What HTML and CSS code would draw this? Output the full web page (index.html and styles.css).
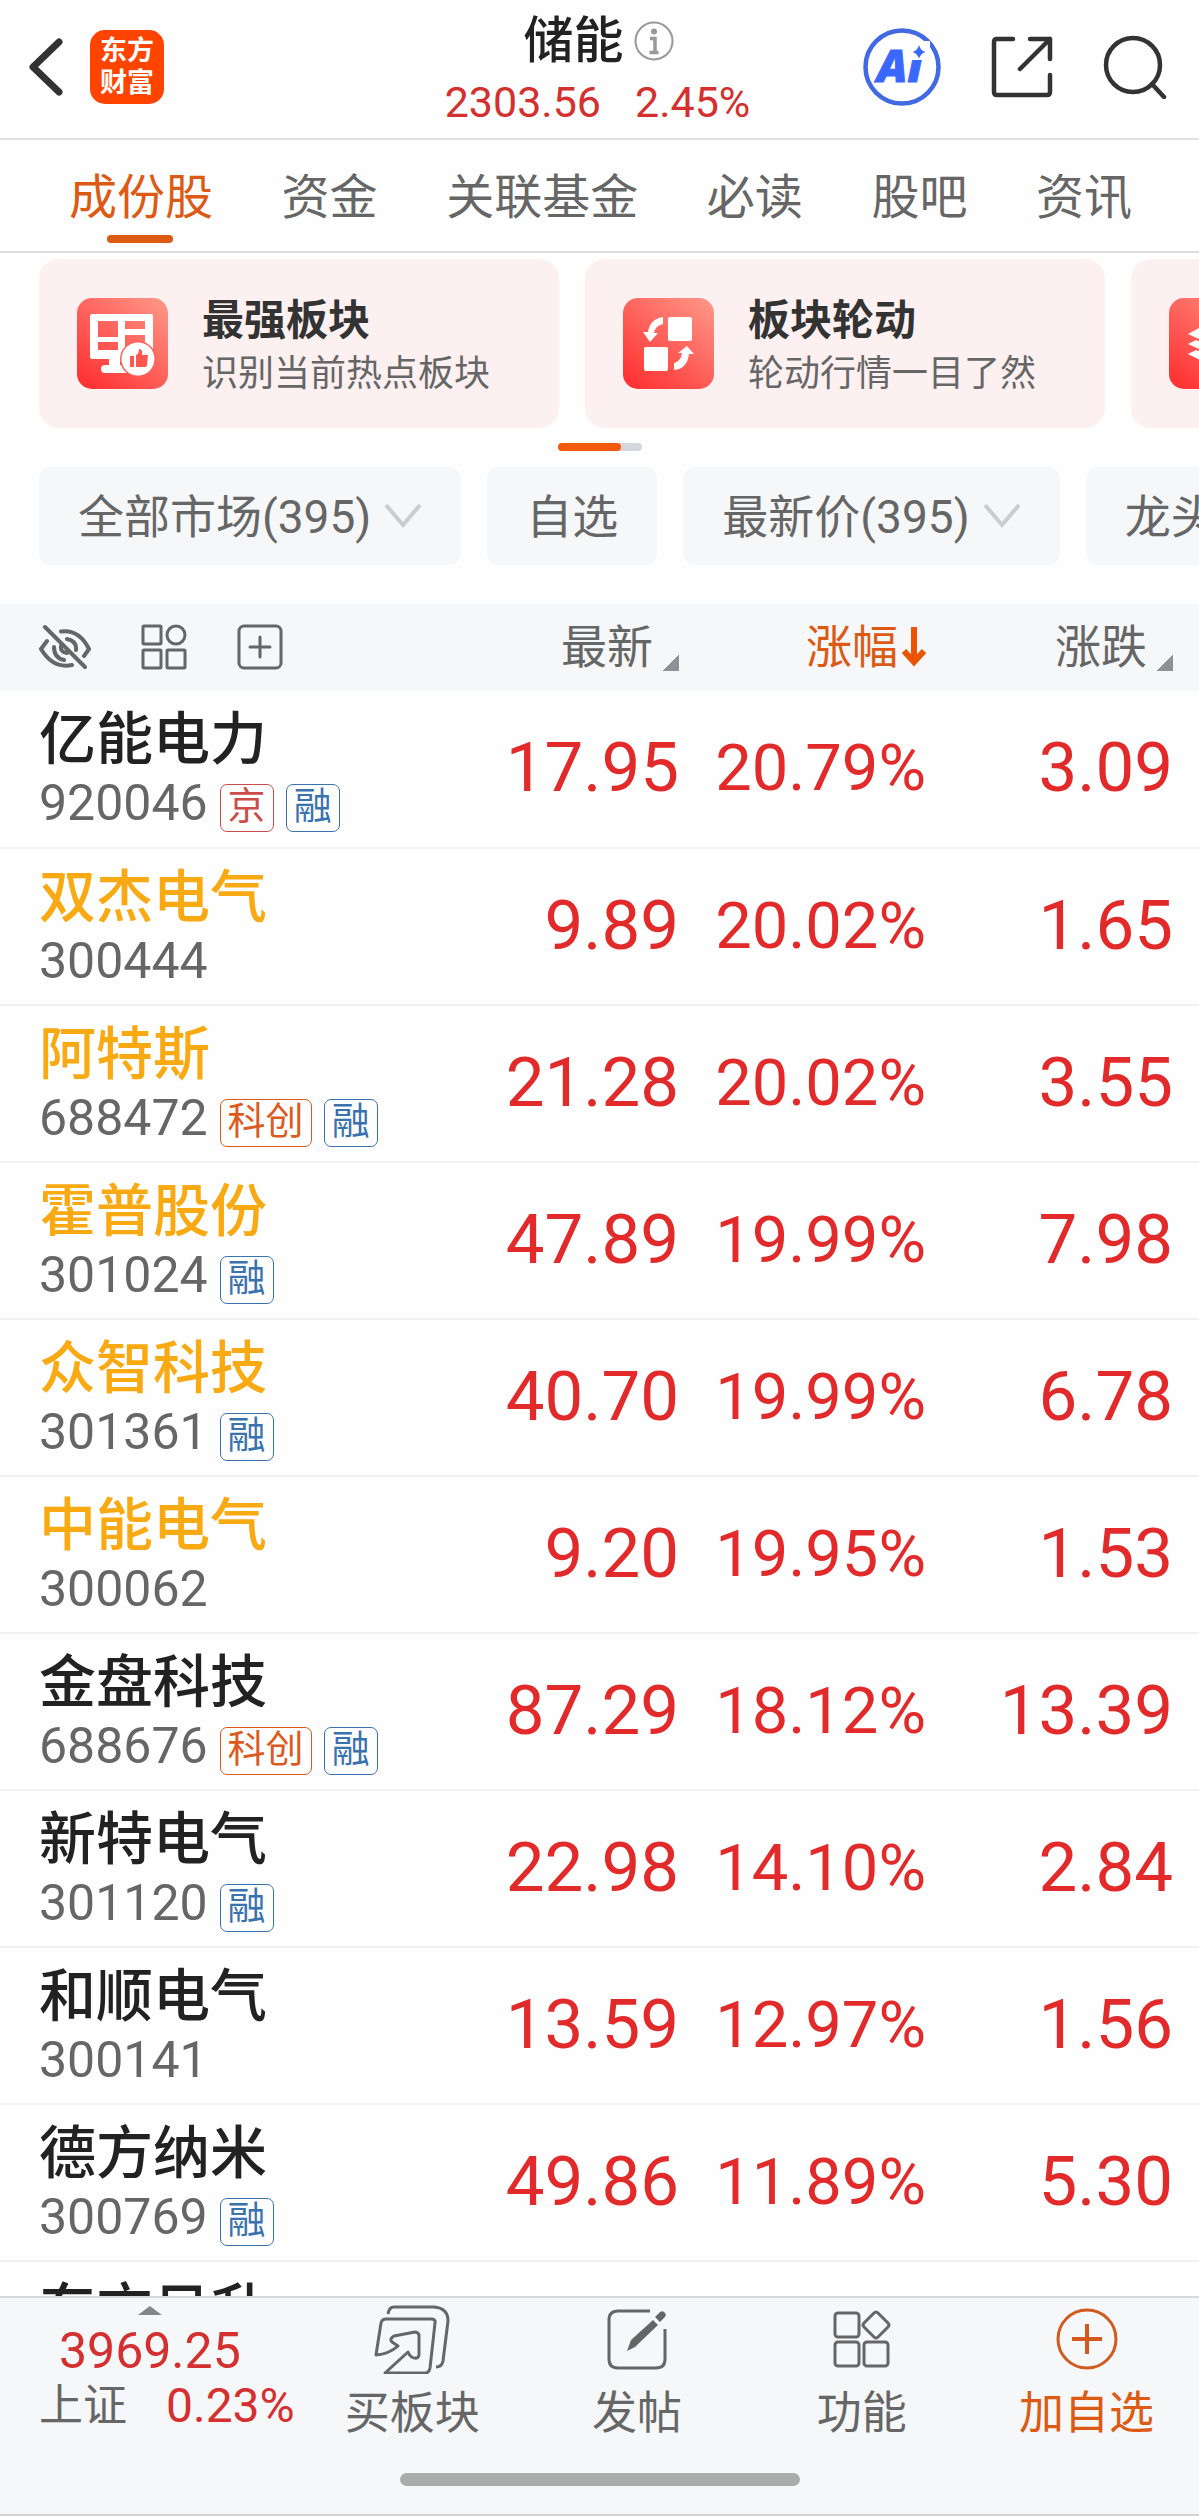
FILE: index.html
```html
<!DOCTYPE html>
<html lang="zh-CN">
<head>
<meta charset="utf-8">
<meta name="viewport" content="width=device-width">
<title>储能</title>
<link rel="stylesheet" href="styles.css">
</head>
<body>
<div class="app">
  <header class="topbar">
    <div class="topbar-left">
      <button class="icon-btn" type="button" aria-label="返回">
        <svg width="36" height="60" viewBox="0 0 36 60" fill="none" stroke="#333" stroke-width="7" stroke-linecap="round" stroke-linejoin="round"><path d="M31 5 5 30 31 55"/></svg>
      </button>
      <a class="logo" href="#"><span>东方</span><span>财富</span></a>
    </div>
    <div class="topbar-title">
      <h1>储能
        <svg width="40" height="40" viewBox="0 0 40 40" fill="none" stroke="#999" stroke-width="2"><circle cx="20" cy="20" r="18.500"/><circle cx="20" cy="10.500" r="3" fill="#999" stroke="none"/><path d="M16 17.500h5V31M15.500 31.500h9" stroke-width="3.500"/></svg>
      </h1>
      <p class="quote"><span>2303.56</span><span>2.45%</span></p>
    </div>
    <div class="topbar-right">
      <button class="icon-btn" type="button" aria-label="AI">
        <svg width="78" height="78" viewBox="0 0 78 78"><circle cx="39" cy="39" r="36.500" fill="#fff" stroke="#4169e1" stroke-width="4.500"/><text class="ai-text" x="14" y="54">Ai</text><path d="M47 13h20v19H47z" fill="#fff"/><path d="M56 17q1.500 5.500 6.500 7-5 1.500-6.500 7-1.500-5.500-6.500-7 5-1.500 6.500-7z" fill="#3a68ff"/></svg>
      </button>
      <button class="icon-btn" type="button" aria-label="分享">
        <svg width="62" height="62" viewBox="0 0 62 62" fill="none" stroke="#333" stroke-width="4.500" stroke-linecap="round" stroke-linejoin="round"><path d="M22 3H6Q3 3 3 6V56Q3 59 6 59H56Q59 59 59 56V39M39 3H59V23M59 3 29 33"/></svg>
      </button>
      <button class="icon-btn" type="button" aria-label="搜索">
        <svg width="64" height="64" viewBox="0 0 64 64" fill="none" stroke="#333" stroke-width="4.500" stroke-linecap="round"><circle cx="30" cy="30" r="27"/><path d="M49 49 61 62"/></svg>
      </button>
    </div>
  </header>

  <nav class="tabs">
    <a class="active" href="#">成份股</a>
    <a href="#">资金</a>
    <a href="#">关联基金</a>
    <a href="#">必读</a>
    <a href="#">股吧</a>
    <a href="#">资讯</a>
  </nav>

  <section class="cards">
    <a class="card" href="#">
      <svg class="card-icon" viewBox="0 0 91 91"><defs><linearGradient id="red" x1="0.100" y1="0.900" x2="0.850" y2="0"><stop offset="0" stop-color="#ff3535"/><stop offset="1" stop-color="#ff9284"/></linearGradient></defs><rect width="91" height="91" rx="15" fill="url(#red)"/><path fill="#fff" fill-rule="evenodd" d="M15 16h59q2 0 2 2v43q0 2-2 2H43v4h8v8H28q-4 0-4-4t4-4h4v-6H15q-2 0-2-2V18q0-2 2-2zM21 23v16h20V23zM48 23v8h20v-8zM48 37v13h20V37zM21 44v8h20v-8z"/><circle cx="61" cy="61" r="18" fill="#ff5f59"/><circle cx="61" cy="61" r="16.500" fill="#fff"/><path fill="#ff5750" d="M53 58h4v11h-4zM59 57q3-1 3-6 4 0 3 6h6l-1 10q0 2-3 2h-8z"/></svg>
      <span class="card-text"><strong>最强板块</strong><span>识别当前热点板块</span></span>
    </a>
    <a class="card" href="#">
      <svg class="card-icon" viewBox="0 0 91 91"><rect width="91" height="91" rx="15" fill="url(#red)"/><g fill="#fff"><rect x="45" y="19" width="24" height="24" rx="2"/><rect x="21" y="49" width="24" height="24" rx="2"/><path d="M20 34h5q2-13 15-15v7q-8 2-9 9h4l-8 9zM71 56h-5q-2 15-15 16v-7q7-2 8-10h-4l9-7z"/></g></svg>
      <span class="card-text"><strong>板块轮动</strong><span>轮动行情一目了然</span></span>
    </a>
    <a class="card" href="#" aria-label="更多">
      <svg class="card-icon" viewBox="0 0 91 91"><rect width="91" height="91" rx="15" fill="url(#red)"/><path fill="#fff" d="M19 36 45 22 71 36 45 48zM19 46l8-4 18 8 18-8 8 4-26 12zM19 56l8-4 18 8 18-8 8 4-26 13z"/></svg>
    </a>
  </section>
  <div class="pager"><span></span></div>

  <div class="chips">
    <button type="button"><span>全部市场(395)</span><svg width="38" height="26" viewBox="0 0 38 26" fill="none" stroke="#ccc" stroke-width="4"><path d="M2 2 19 22 36 2"/></svg></button>
    <button type="button"><span>自选</span></button>
    <button type="button"><span>最新价(395)</span><svg width="38" height="26" viewBox="0 0 38 26" fill="none" stroke="#ccc" stroke-width="4"><path d="M2 2 19 22 36 2"/></svg></button>
    <button type="button"><span>龙头</span></button>
  </div>

  <main class="list">
    <table>
      <colgroup><col><col class="col-price"><col class="col-rate"><col class="col-change"></colgroup>
      <thead>
        <tr>
          <th>
            <div class="tools">
              <button class="icon-btn" type="button" aria-label="隐藏"><svg width="52" height="46" viewBox="0 0 52 46" fill="none" stroke="#666" stroke-width="4" stroke-linecap="round"><path d="M6 3 46 43M22 7.500Q40 5 50 25L45 32M8 17 2 25Q14 45 33 41M15 23Q15 34 25 36M28 15Q38 17 37 26M22 22Q21 28 28 29"/></svg></button>
              <button class="icon-btn" type="button" aria-label="布局"><svg width="46" height="46" viewBox="0 0 46 46" fill="none" stroke="#666" stroke-width="3"><rect x="2" y="2" width="18" height="18" rx="1"/><circle cx="35" cy="11" r="9"/><rect x="2" y="26" width="18" height="18" rx="1"/><rect x="26" y="26" width="18" height="18" rx="1"/></svg></button>
              <button class="icon-btn" type="button" aria-label="添加"><svg width="46" height="46" viewBox="0 0 46 46" fill="none" stroke="#666" stroke-width="3" stroke-linecap="round"><rect x="2" y="2" width="42" height="42" rx="5"/><path d="M13 23H33M23 13V33"/></svg></button>
            </div>
          </th>
          <th><button class="sort" type="button">最新<i class="corner"></i></button></th>
          <th><button class="sort sorted" type="button">涨幅<svg width="24" height="40" viewBox="0 0 24 40" fill="none" stroke="#ea5404" stroke-width="6"><path d="M12 0V35M2 24 12 35 22 24"/></svg></button></th>
          <th><button class="sort" type="button">涨跌<i class="corner"></i></button></th>
        </tr>
      </thead>
      <tbody>
        <tr><td><div class="name">亿能电力</div><div class="meta">920046<span class="tag tag-jing">京</span><span class="tag">融</span></div></td><td>17.95</td><td>20.79%</td><td>3.09</td></tr>
        <tr><td><div class="name held">双杰电气</div><div class="meta">300444</div></td><td>9.89</td><td>20.02%</td><td>1.65</td></tr>
        <tr><td><div class="name held">阿特斯</div><div class="meta">688472<span class="tag tag-star">科创</span><span class="tag">融</span></div></td><td>21.28</td><td>20.02%</td><td>3.55</td></tr>
        <tr><td><div class="name held">霍普股份</div><div class="meta">301024<span class="tag">融</span></div></td><td>47.89</td><td>19.99%</td><td>7.98</td></tr>
        <tr><td><div class="name held">众智科技</div><div class="meta">301361<span class="tag">融</span></div></td><td>40.70</td><td>19.99%</td><td>6.78</td></tr>
        <tr><td><div class="name held">中能电气</div><div class="meta">300062</div></td><td>9.20</td><td>19.95%</td><td>1.53</td></tr>
        <tr><td><div class="name">金盘科技</div><div class="meta">688676<span class="tag tag-star">科创</span><span class="tag">融</span></div></td><td>87.29</td><td>18.12%</td><td>13.39</td></tr>
        <tr><td><div class="name">新特电气</div><div class="meta">301120<span class="tag">融</span></div></td><td>22.98</td><td>14.10%</td><td>2.84</td></tr>
        <tr><td><div class="name">和顺电气</div><div class="meta">300141</div></td><td>13.59</td><td>12.97%</td><td>1.56</td></tr>
        <tr><td><div class="name">德方纳米</div><div class="meta">300769<span class="tag">融</span></div></td><td>49.86</td><td>11.89%</td><td>5.30</td></tr>
        <tr><td><div class="name">东方日升</div><div class="meta"></div></td><td></td><td></td><td></td></tr>
      </tbody>
    </table>
  </main>

  <footer class="dock">
    <div class="dock-row">
      <a class="index" href="#">
        <i class="caret"></i>
        <span class="index-value">3969.25</span>
        <span class="index-line"><span>上证</span><span class="index-rate">0.23%</span></span>
      </a>
      <button class="action" type="button">
        <svg width="76" height="70" viewBox="0 0 76 70" fill="none" stroke="#666" stroke-width="3" stroke-linejoin="round"><path d="M14 10Q15 3 20 3H60Q74 4 74 17L69 57Q68 63 62 63"/><path d="M2 51 7 19Q8 15 12 15H57Q62 15 61 19L56 64Q55 69 51 69H11L34 48Q37 55 43 54 45 53 45 50V31Q44 28 41 28L20 32Q15 35 18 38L24 42Q15 50 2 51Z"/></svg>
        买板块
      </button>
      <button class="action" type="button">
        <svg width="60" height="70" viewBox="0 0 60 70" fill="none" stroke="#666" stroke-width="3"><path d="M43 7H11Q2 7 2 16V55Q2 64 11 64H49Q58 64 58 55V25"/><path d="M20 47 24 36 46 16 51 21 28 43zM48 13l5-5q3-2 5 1 2 2-1 5l-4 4z" fill="#666" stroke="none"/></svg>
        发帖
      </button>
      <button class="action" type="button">
        <svg width="58" height="70" viewBox="0 0 58 70" fill="none" stroke="#666" stroke-width="3" stroke-linejoin="round"><rect x="2" y="9" width="24" height="24" rx="3"/><rect x="2" y="38" width="24" height="24" rx="3"/><rect x="31" y="38" width="24" height="24" rx="3"/><path d="M41 9Q43 7 45 9L55 19Q57 21 55 23L45 33Q43 35 41 33L31 23Q29 21 31 19Z"/></svg>
        功能
      </button>
      <button class="action primary" type="button">
        <svg width="62" height="70" viewBox="0 0 62 70" fill="none" stroke="#d35a1e" stroke-width="3"><circle cx="31" cy="35" r="29"/><path d="M16 35H46M31 20V50" stroke-width="4"/></svg>
        加自选
      </button>
    </div>
    <div class="home-bar"></div>
  </footer>
</div>
</body>
</html>
```

FILE: styles.css
```css
* { box-sizing: border-box; margin: 0; padding: 0; }

body {
  font-family: Roboto, "Noto Sans CJK SC", sans-serif;
  color: #666;
  background: #fefefe;
}

a { color: inherit; text-decoration: none; }
svg { display: block; flex: none; }
button { font: inherit; color: inherit; background: none; border: 0; }
.icon-btn { display: block; }

.app {
  display: flex;
  flex-direction: column;
  height: 100vh;
  overflow: hidden;
}
.app > * { flex: none; }

/* Top bar */
.topbar {
  display: grid;
  grid-template-columns: 1fr auto 1fr;
  align-items: center;
  height: 140px;
  padding: 0 32px 0 28px;
  border-bottom: 2px solid #e0e0e2;
}
.topbar-left { display: flex; align-items: center; gap: 26px; padding-bottom: 4px; }
.topbar-right { display: flex; align-items: center; justify-content: flex-end; gap: 50px; padding-bottom: 4px; }
.logo {
  display: flex;
  flex-direction: column;
  align-items: center;
  justify-content: center;
  width: 74px;
  height: 74px;
  border-radius: 15px;
  background: #ff4400;
  color: #fff;
  font-size: 27px;
  font-weight: 700;
  line-height: 32px;
}
.topbar-title { text-align: center; }
.topbar-title h1 {
  display: flex;
  align-items: center;
  justify-content: center;
  gap: 10px;
  padding-left: 2px;
  font-size: 50px;
  font-weight: 500;
  line-height: 60px;
  color: #222;
}
.quote {
  display: flex;
  justify-content: center;
  gap: 34px;
  margin-top: 6px;
  font-size: 43px;
  line-height: 50px;
  color: #d3302f;
}
.ai-text {
  font-family: "Open Sans", sans-serif;
  font-size: 45px;
  font-weight: 800;
  font-style: italic;
  fill: #3a68ff;
  stroke: #3a68ff;
  stroke-width: 1px;
}

/* Tabs */
.tabs {
  display: flex;
  justify-content: space-between;
  height: 113px;
  padding: 0 67px 0 69px;
  border-bottom: 2px solid #dddee0;
  font-size: 48px;
  line-height: 116px;
}
.tabs .active { position: relative; color: #dc5a14; }
.tabs .active::after {
  content: "";
  position: absolute;
  left: 50%;
  bottom: 8px;
  width: 66px;
  height: 8px;
  margin-left: -34px;
  border-radius: 4px;
  background: #dc5a14;
}

/* Promo cards */
.cards { display: flex; gap: 26px; padding: 6px 0 0 39px; overflow: hidden; }
.card {
  display: flex;
  flex: none;
  align-items: center;
  gap: 34px;
  width: 520px;
  height: 169px;
  padding: 0 38px;
  border-radius: 20px;
  background: #fdf0f0;
}
.card-icon { width: 91px; height: 91px; }
.card-text { display: flex; flex-direction: column; gap: 2px; padding-top: 4px; font-size: 36px; line-height: 48px; }
.card-text strong { font-size: 42px; font-weight: 700; line-height: 54px; color: #333; }
.pager {
  align-self: center;
  width: 84px;
  height: 8px;
  margin: 15px 0 16px;
  border-radius: 4px;
  background: #d5d7dc;
}
.pager span { display: block; width: 63px; height: 8px; border-radius: 4px; background: #f25a0e; }

/* Filter chips */
.chips { display: flex; gap: 26px; padding-left: 39px; overflow: hidden; }
.chips button {
  display: flex;
  flex: none;
  align-items: center;
  gap: 13px;
  height: 98px;
  padding: 0 39px;
  border-radius: 12px;
  background: #f6f7f9;
  font-size: 46px;
  white-space: nowrap;
}
.chips span { padding-bottom: 6px; }

/* Stock table */
.app > .list { flex: 1; min-height: 0; margin-top: 39px; overflow: hidden; }
table { width: 100%; border-collapse: collapse; table-layout: fixed; }
.col-price { width: 230px; }
.col-rate { width: 247px; }
.col-change { width: 273px; }
thead tr { height: 87px; background: #f6f7f9; }
th { padding-bottom: 2px; font-size: 46px; font-weight: 400; text-align: right; }
.tools { display: flex; align-items: center; gap: 50px; padding-left: 39px; }
.sort { display: inline-flex; align-items: center; gap: 4px; line-height: 60px; vertical-align: middle; }
.sorted { color: #dc5a14; }
.corner {
  align-self: flex-end;
  width: 16px;
  height: 16px;
  margin: 0 0 6px 6px;
  background: linear-gradient(135deg, transparent 50%, #8f9094 50%);
}
tbody tr { height: 157px; border-bottom: 2px solid #f1f1f2; }
td {
  padding-bottom: 2px;
  font-size: 69px;
  line-height: 80px;
  text-align: right;
  color: #e22a2a;
}
td:first-child { padding: 18px 0 14px 39px; text-align: left; }
td:nth-child(3) { font-size: 65px; }
th:last-child, td:last-child { padding-right: 26px; }
.name { font-size: 57px; font-weight: 500; line-height: 60px; color: #222; }
.held { color: #f9a911; }
.meta {
  display: flex;
  gap: 12px;
  height: 48px;
  margin-top: 14px;
  font-size: 50px;
  line-height: 38px;
  color: #666;
}
.tag {
  height: 48px;
  padding: 0 7px;
  border: 1px solid #3a72b0;
  border-radius: 7px;
  font-size: 38px;
  line-height: 42px;
  color: #3a72b0;
}
.tag-jing { border-color: #cc4c4c; color: #cc4c4c; }
.tag-star { border-color: #dc5a1e; color: #dc5a1e; }

/* Bottom dock */
.dock {
  padding-bottom: 28px;
  border-top: 2px solid #d6d9dc;
  border-bottom: 2px solid #d0d0d0;
  background: #f6f7f9;
}
.dock-row { display: grid; grid-template-columns: 4fr 3fr 3fr 3fr 3fr; height: 175px; }
.index { display: flex; flex-direction: column; align-items: center; padding-top: 8px; }
.caret {
  width: 24px;
  height: 9px;
  background: #85868a;
  clip-path: polygon(50% 0, 100% 100%, 0 100%);
}
.index-value { margin-top: 6px; font-size: 50px; line-height: 60px; color: #d3302f; }
.index-line {
  display: flex;
  justify-content: space-between;
  align-self: stretch;
  padding: 0 5px 0 39px;
  font-size: 44px;
  line-height: 50px;
}
.index-rate { font-size: 48px; color: #d3302f; }
.action {
  display: flex;
  flex-direction: column;
  align-items: center;
  gap: 10px;
  padding-top: 6px;
  font-size: 45px;
  line-height: 60px;
}
.primary { color: #dc5a14; }
.home-bar { width: 400px; height: 13px; margin: 0 auto; border-radius: 7px; background: #abadac; }
```
